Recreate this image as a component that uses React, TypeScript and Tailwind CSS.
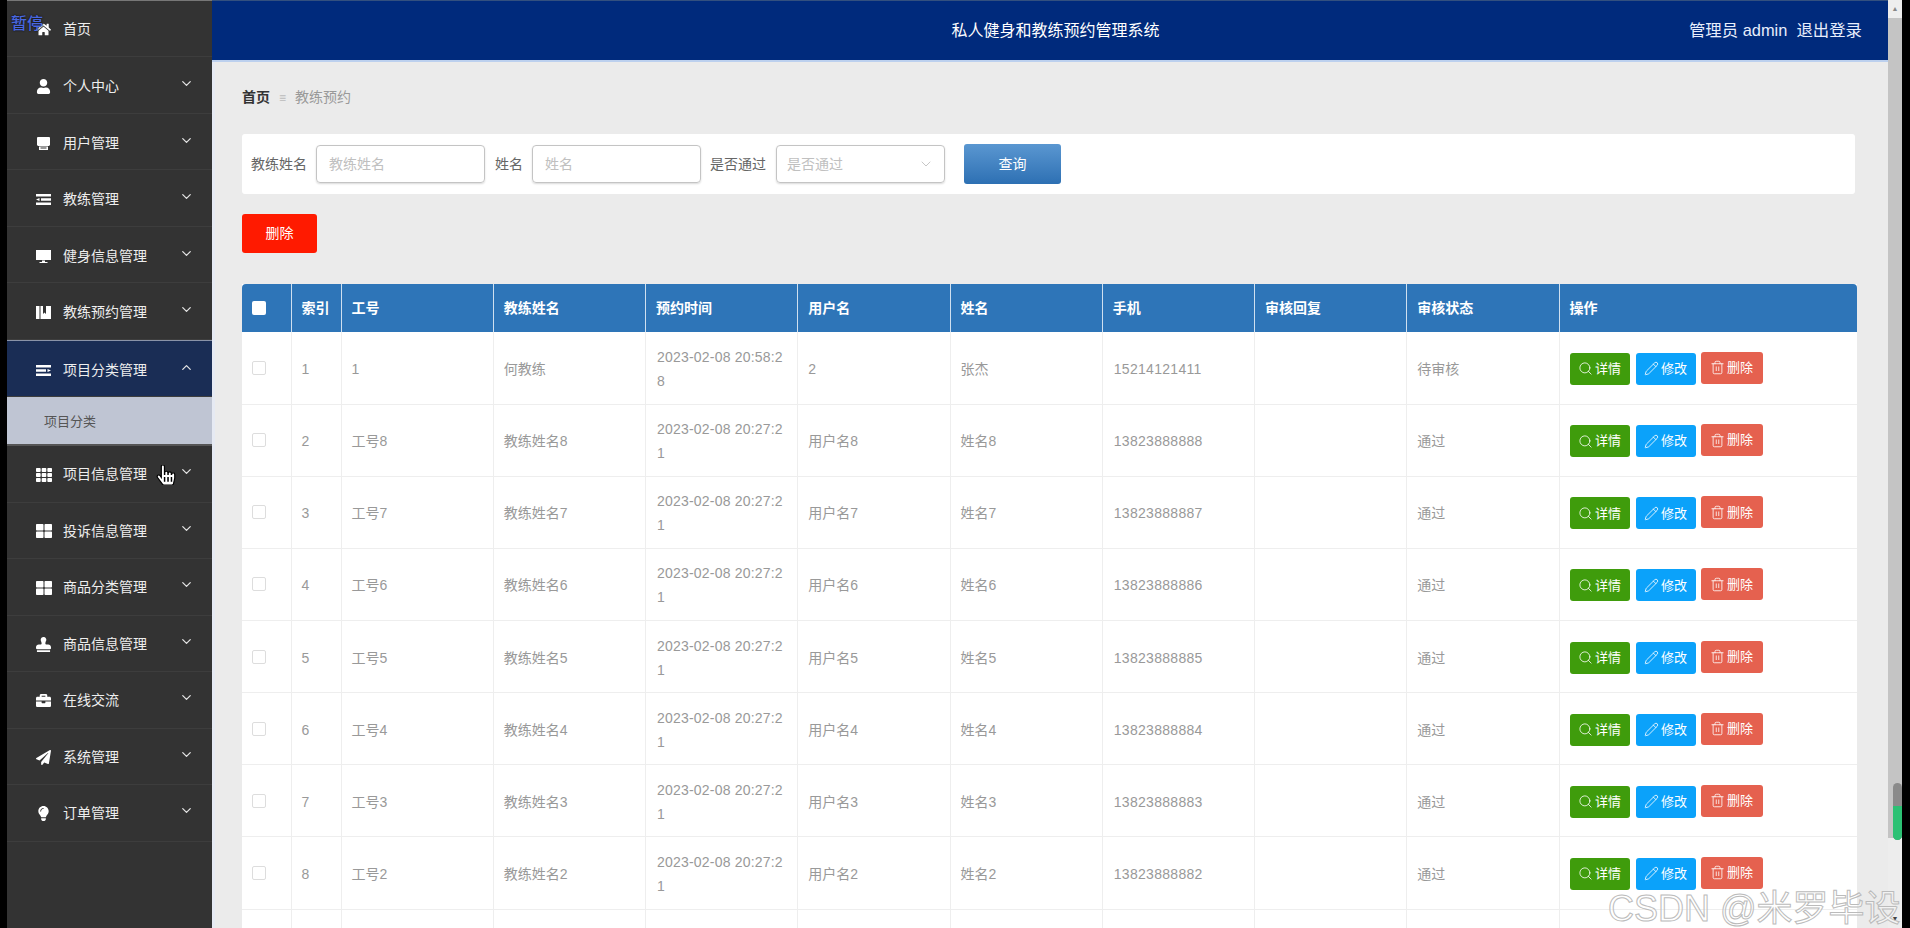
import { FaHome, FaUser, FaTh, FaThLarge, FaStamp, FaBriefcase, FaPaperPlane, FaLightbulb, FaHandPointer } from "react-icons/fa";
import { ChevronDown, ChevronUp, Search, Pencil, Trash2 } from "lucide-react";

const font = { fontFamily: '"Liberation Sans","Noto Sans CJK SC",sans-serif' };

const IconBase = ({ d }: { d: string }) => (
  <svg width="15" height="15" viewBox="0 0 15 15" fill="#ffffff" fillRule="evenodd"><path d={d} /></svg>
);
const Tray = () => <IconBase d="M2 1h11a1 1 0 0 1 1 1v7l-1 1H2L1 9V2a1 1 0 0 1 1-1zM3 10.5h9V14H3zM4.5 11.5v1h6v-1z" />;
const Bars = () => <IconBase d="M0 2h15v2.6H0zM5 6.2h10v2.6H5zM0 10.4h15V13H0zM0 7.5l3.5-1.6v3.2z" />;
const BarsR = () => <IconBase d="M0 2h15v2.6H0zM0 6.2h10v2.6H0zM0 10.4h15V13H0zM15 7.5l-3.5-1.6v3.2z" />;
const Screen = () => <IconBase d="M0 1h15v10H0zM6 11.5h3V13h2.5v1h-8v-1H6z" />;
const Book = () => <IconBase d="M0 1h3.5v13H0zM4.5 1H7v8l1.5-1.5L10 9V1h5v13H4.5z" />;

const menu = [
  { t: "个人中心", I: () => <FaUser size={15} color="#fff" /> },
  { t: "用户管理", I: Tray },
  { t: "教练管理", I: Bars },
  { t: "健身信息管理", I: Screen },
  { t: "教练预约管理", I: Book },
];
const menu2 = [
  { t: "项目信息管理", I: () => <FaTh size={16} color="#fff" /> },
  { t: "投诉信息管理", I: () => <FaThLarge size={16} color="#fff" /> },
  { t: "商品分类管理", I: () => <FaThLarge size={16} color="#fff" /> },
  { t: "商品信息管理", I: () => <FaStamp size={15} color="#fff" /> },
  { t: "在线交流", I: () => <FaBriefcase size={15} color="#fff" /> },
  { t: "系统管理", I: () => <FaPaperPlane size={15} color="#fff" /> },
  { t: "订单管理", I: () => <FaLightbulb size={15} color="#fff" /> },
];

const cols = ["索引", "工号", "教练姓名", "预约时间", "用户名", "姓名", "手机", "审核回复", "审核状态", "操作"];
const rows = [
  ["1", "1", "何教练", "2023-02-08 20:58:28", "2", "张杰", "15214121411", "", "待审核"],
  ...[8, 7, 6, 5, 4, 3, 2].map((n, i) => [
    String(i + 2),
    `工号${n}`,
    `教练姓名${n}`,
    "2023-02-08 20:27:21",
    `用户名${n}`,
    `姓名${n}`,
    `1382388888${n}`,
    "",
    "通过",
  ]),
];

function Row({ t, I, open, low }: { t: string; I: any; open?: boolean; low?: boolean }) {
  return (
    <div className={`flex h-[56.5px] items-center border-b border-[#3d3d3d] pl-[29px] pr-[18px] text-[14px] text-[#eeeeee] ${low ? "pt-[4px]" : "pt-[2px]"} ${open ? "bg-[#1a2d55]" : ""}`}>
      <span className="flex w-[27px] shrink-0"><I /></span>
      <span className="flex-1">{t}</span>
      {open ? <ChevronUp size={15} color="#e5e5e5" className="-mt-[6px]" /> : <ChevronDown size={15} color="#e5e5e5" className="-mt-[6px]" />}
    </div>
  );
}

function Btn({ c, I, t, up }: { c: string; I: any; t: string; up?: boolean }) {
  return (
    <span className={`flex h-[32px] w-[60px] items-center justify-center gap-[2px] rounded-[3px] text-[13px] text-white ${c} ${up ? "-mt-[2px]" : ""}`}>
      <I size={15} strokeWidth={1.3} />
      {t}
    </span>
  );
}

export default function App() {
  return (
    <div style={font} className="relative flex h-[928px] w-[1910px] overflow-hidden bg-black">
      <div className="w-[7px] shrink-0 bg-black" />
      <aside className="w-[205px] shrink-0 border-t border-[#777777] bg-[#333333]">
        <div className="flex h-[56px] items-center border-b border-[#3d3d3d] pl-[29px] pt-[2px] text-[14px] text-[#eeeeee]">
          <span className="flex w-[27px]"><FaHome size={15} color="#ffffff" /></span>
          首页
        </div>
        {menu.map((m) => <Row key={m.t} {...m} low />)}
        <div className="border-t border-[#8a93a8]" />
        <Row t="项目分类管理" I={BarsR} open low />
        <div className="flex h-[49px] items-center border-b-2 border-[#555555] bg-[#bfc5d3] pl-[37px] pt-[2px] text-[13px] text-[#555555]">项目分类</div>
        {menu2.map((m) => <Row key={m.t} {...m} />)}
      </aside>

      <main className="flex w-[1676px] shrink-0 flex-col border-l-[3px] border-[#e6eaf3] bg-[#ebebeb]">
        <header className="-ml-[3px] flex h-[62px] shrink-0 items-center border-t border-[#33507f] border-b-2 border-b-[#bcd0ee] bg-[#002a7c] pl-[3px] text-white">
          <div className="flex-1 pl-[207px] text-center text-[16px]">私人健身和教练预约管理系统</div>
          <div className="text-[16.4px] text-[#e8eefc]">管理员 admin&nbsp;&nbsp;退出登录</div>
          <div className="w-[26px]" />
        </header>

        <div className="flex-1 pl-[27px] pr-[33px]">
          <div className="flex h-[71px] items-center text-[14px] text-[#999999]">
            <span className="font-bold text-[#333333]">首页</span>
            <span className="mx-[9px] text-[12px] leading-none text-[#bbbbbb]">≡</span>
            教练预约
          </div>

          <div className="mt-[1px] flex h-[60px] items-center rounded-[3px] bg-white pl-[9px] text-[14px] text-[#666666]">
            <span>教练姓名</span>
            <div className="ml-[9px] flex h-[38px] w-[169px] items-center rounded-[4px] border border-[#c4c4c4] pl-[12px] text-[#c0c0c0] shadow-[0_1px_2px_rgba(0,0,0,0.15)]">教练姓名</div>
            <span className="ml-[10px]">姓名</span>
            <div className="ml-[9px] flex h-[38px] w-[169px] items-center rounded-[4px] border border-[#c4c4c4] pl-[12px] text-[#c0c0c0] shadow-[0_1px_2px_rgba(0,0,0,0.15)]">姓名</div>
            <span className="ml-[9px]">是否通过</span>
            <div className="ml-[10px] flex h-[38px] w-[169px] items-center justify-between rounded-[4px] border border-[#c4c4c4] pl-[10px] pr-[10px] text-[#c0c0c0] shadow-[0_1px_2px_rgba(0,0,0,0.15)]">
              是否通过
              <ChevronDown size={16} strokeWidth={1} color="#aaaaaa" />
            </div>
            <div className="ml-[19px] flex h-[40px] w-[97px] items-center justify-center rounded-[3px] bg-gradient-to-b from-[#5a97d1] to-[#2d70b3] text-[14px] text-white">查询</div>
          </div>

          <div className="mt-[20px] flex h-[39px] w-[75px] items-center justify-center rounded-[3px] bg-[#ff1a00] text-[14px] text-white">删除</div>

          <table className="mt-[31px] w-[1615px] table-fixed border-collapse bg-white text-[14px] text-[#999999]">
            <colgroup>
              <col className="w-[49px]" />
              <col className="w-[50px]" />
              {[0, 1, 2, 3, 4, 5, 6, 7].map((i) => <col key={i} className="w-[152.25px]" />)}
              <col />
            </colgroup>
            <thead>
              <tr className="h-[48px] bg-[#2e75b8] text-left text-[14px] font-bold text-white">
                <th className="rounded-tl-[4px] border-r border-[#cfe0f0] pl-[10px]">
                  <span className="block h-[14px] w-[14px] rounded-[2px] bg-white" />
                </th>
                {cols.map((c, i) => (
                  <th key={c} className={`px-[10px] ${i < 9 ? "border-r border-[#cfe0f0]" : "rounded-tr-[4px]"}`}>{c}</th>
                ))}
              </tr>
            </thead>
            <tbody>
              {rows.map((r) => (
                <tr key={r[0]} className="h-[72.13px] border-b border-[#eeeeee]">
                  <td className="border-r border-[#eeeeee] pl-[10px]">
                    <span className="block h-[14px] w-[14px] rounded-[2px] border border-[#dddddd]" />
                  </td>
                  {r.map((v, i) => (
                    <td key={i} className={`border-r border-[#eeeeee] px-[10px] pt-[2px] leading-[24px] [word-break:break-all] ${i === 6 ? "pl-[11px] tracking-[0.3px]" : ""} ${i === 3 ? "pl-[11px] tracking-[0.2px]" : ""}`}>{v}</td>
                  ))}
                  <td className="px-[10px]">
                    <div className="mt-[2px] flex items-center">
                      <Btn c="bg-[#3f9c0c]" I={Search} t="详情" />
                      <span className="w-[6px]" />
                      <Btn c="bg-[#0ba2fa]" I={Pencil} t="修改" />
                      <span className="w-[5px]" />
                      <Btn c="w-[62px] bg-[#e5614f]" I={Trash2} t="删除" up />
                    </div>
                  </td>
                </tr>
              ))}
              <tr className="h-[72.13px]">
                {[0, 1, 2, 3, 4, 5, 6, 7, 8, 9].map((i) => <td key={i} className="border-r border-[#eeeeee]" />)}
                <td />
              </tr>
            </tbody>
          </table>
        </div>
      </main>

      <div className="relative w-[14px] shrink-0 bg-[#c4c4c4]">
        <div className="flex h-[18px] items-center justify-center bg-[#eeeeee] text-[7px] text-[#888888]">▲</div>
        <div className="absolute inset-x-0 bottom-0 top-[838px] bg-[#ededed]" />
        <div className="absolute left-[5px] top-[783px] h-[57px] w-[9px] overflow-hidden rounded-full bg-[#8a8a8a]">
          <div className="mt-[23px] h-[34px] bg-[#2cc174]" />
        </div>
        <div className="absolute bottom-[4px] left-0 right-0 text-center text-[7px] text-[#444444]">▼</div>
      </div>

      <div className="absolute left-[11px] top-[10px] text-[16px] font-medium text-[#4a68e0] [font-family:'Noto_Sans_CJK_SC',sans-serif] [text-shadow:0_0_2px_#000]">暂停</div>
      <div className="absolute left-[156px] top-[465px]">
        <FaHandPointer size={20} color="#ffffff" stroke="#000000" strokeWidth={30} />
      </div>
      <div className="absolute left-[1608px] top-[882px] whitespace-nowrap text-[36px] text-white/40 [-webkit-text-stroke:1px_#bbbbbb]">CSDN @米罗毕设</div>
    </div>
  );
}
